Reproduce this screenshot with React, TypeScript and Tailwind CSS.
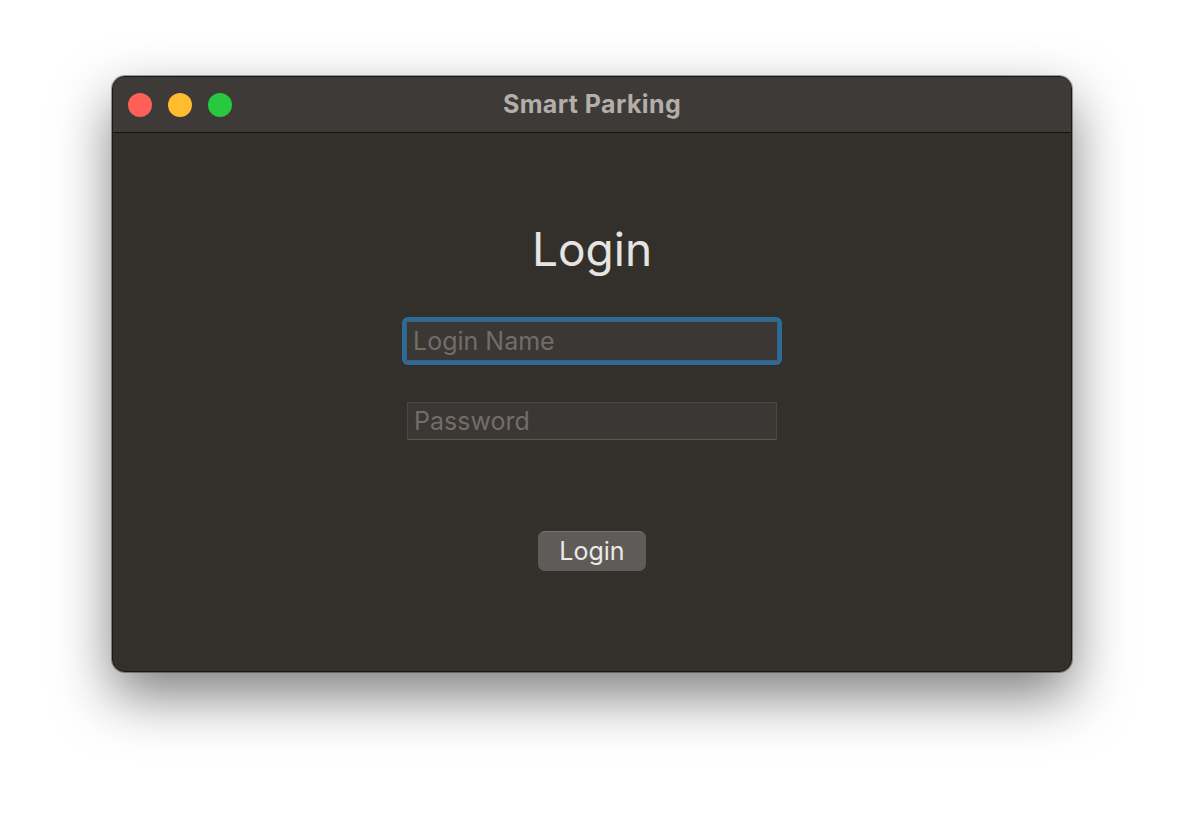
import { useState } from 'react'

export default function App() {
  const [name, setName] = useState('')
  const [pass, setPass] = useState('')

  return (
    <div className="w-[1184px] h-[820px] bg-white flex items-start justify-center pt-[76px] font-['Inter','Noto_Sans',sans-serif]">
      <div className="w-[960px] h-[596px] rounded-[13px] border border-[#1a1816] bg-[#33302c] shadow-[0_24px_55px_rgba(0,0,0,0.5),0_0_0_1px_rgba(110,106,102,0.6)] overflow-hidden flex flex-col">
        <div className="h-[56px] bg-[#3e3a37] border-b border-[#141210] flex items-center relative">
          <div className="flex gap-[16px] pl-[15px]">
            <span className="w-[24px] h-[24px] rounded-full bg-[#fe5f57]" />
            <span className="w-[24px] h-[24px] rounded-full bg-[#febc2e]" />
            <span className="w-[24px] h-[24px] rounded-full bg-[#28c840]" />
          </div>
          <div className="absolute inset-0 flex items-center justify-center text-[25px] tracking-[0.4px] font-bold text-[#b3aeaa] pointer-events-none">
            Smart Parking
          </div>
        </div>

        <div className="flex flex-col items-center">
          <h1 className="mt-[90px] text-[46px] leading-[52px] text-[#e6e4e2]">Login</h1>

          <div className="mt-[42px] p-[4px] rounded-[6px] bg-[#2a6b99]">
            <input
              value={name}
              onChange={e => setName(e.target.value)}
              placeholder="Login Name"
              className="w-[372px] h-[40px] bg-[#3b3734] px-[6px] text-[25px] text-[#e6e4e2] placeholder:text-[#726d69] outline-none border border-[#3f5d74]"
            />
          </div>

          <input
            type="password"
            value={pass}
            onChange={e => setPass(e.target.value)}
            placeholder="Password"
            className="mt-[37px] w-[370px] h-[38px] bg-[#3b3734] px-[6px] text-[25px] text-[#e6e4e2] placeholder:text-[#726d69] outline-none border border-[#4a4643] border-b-[#5a5653]"
          />

          <button className="mt-[91px] w-[108px] h-[40px] rounded-[7px] bg-[#5f5b58] text-[25px] text-[#ece9e7] border-t border-[#75716e]">
            Login
          </button>
        </div>
      </div>
    </div>
  )
}
